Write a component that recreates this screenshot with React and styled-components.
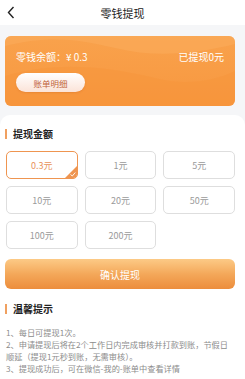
import React, { useState } from "react";
import styled, { createGlobalStyle } from "styled-components";

const Global = createGlobalStyle`
  html, body { margin: 0; padding: 0; }
  body { font-family: "Noto Sans CJK SC", "Noto Sans", sans-serif; background: #f5f6f8; }
  * { box-sizing: border-box; }
`;

const Page = styled.div`
  width: 245px;
  min-height: 379px;
  display: flex;
  flex-direction: column;
  background: #f5f6f8;
`;

const Header = styled.div`
  height: 25px;
  background: #fff;
  display: flex;
  align-items: center;
  justify-content: center;
  position: relative;
  font-size: 11px;
  color: #222;
`;

const Back = styled.svg`
  position: absolute;
  left: 7px;
  top: 6px;
`;

const Card = styled.div`
  margin: 11px 10px 0 5px;
  height: 70px;
  border-radius: 6px;
  background: linear-gradient(180deg, #f9a24c 0%, #f7973f 100%);
  position: relative;
  overflow: hidden;
  padding: 14px 11px 0 11px;
  display: flex;
  flex-direction: column;
  gap: 9px;
`;

const Waves = styled.svg`
  position: absolute;
  left: 0;
  top: 0;
  pointer-events: none;
`;

const CardRow = styled.div`
  position: relative;
  display: flex;
  justify-content: space-between;
  align-items: center;
  color: #fff;
  font-size: 10px;
  line-height: 14px;
`;

const BillButton = styled.div`
  position: relative;
  width: 69px;
  height: 19px;
  border-radius: 10px;
  background: linear-gradient(180deg, #ffffff 0%, #fbe3d8 100%);
  box-shadow: 0 1px 2px rgba(190, 90, 30, 0.25);
  color: #c0623a;
  font-size: 8.5px;
  display: flex;
  align-items: center;
  justify-content: center;
`;

const Panel = styled.div`
  flex: 1;
  margin-top: 9px;
  background: #fff;
  border-radius: 10px 10px 0 0;
  padding: 12px 10px 0 5px;
  display: flex;
  flex-direction: column;
`;

const SectionTitle = styled.div`
  display: flex;
  align-items: center;
  gap: 6px;
  font-size: 10px;
  font-weight: 700;
  color: #222;
  line-height: 14px;
  &::before {
    content: "";
    width: 2px;
    height: 10px;
    background: #f0a060;
  }
`;

const Grid = styled.div`
  margin-top: 10px;
  display: grid;
  grid-template-columns: repeat(3, 1fr);
  column-gap: 7px;
  row-gap: 7px;
  padding-left: 1px;
`;

const Amount = styled.div`
  height: 28px;
  border-radius: 5px;
  border: 1px solid ${(p) => (p.$active ? "#ef9550" : "#dedede")};
  color: ${(p) => (p.$active ? "#e8925a" : "#9a9a9a")};
  font-size: 9px;
  display: flex;
  align-items: center;
  justify-content: center;
  position: relative;
  overflow: hidden;
`;

const Tick = styled.svg`
  position: absolute;
  right: 0;
  bottom: 0;
`;

const Confirm = styled.div`
  margin-top: 10px;
  height: 30px;
  border-radius: 6px;
  background: linear-gradient(180deg, #fcca86 0%, #f4a85a 50%, #ec8d3c 100%);
  color: #fff;
  font-size: 10px;
  display: flex;
  align-items: center;
  justify-content: center;
`;

const TipsTitle = styled(SectionTitle)`
  margin-top: 13px;
`;

const Tips = styled.div`
  margin-top: 10px;
  padding-left: 1px;
  font-size: 8.2px;
  line-height: 12px;
  color: #8c8c8c;
`;

const amounts = ["0.3元", "1元", "5元", "10元", "20元", "50元", "100元", "200元"];

export default function App() {
  const [sel, setSel] = useState(0);
  return (
    <>
      <Global />
      <Page>
        <Header>
          <Back width="8" height="13" viewBox="0 0 8 13">
            <path d="M6.5 1 L1.5 6.5 L6.5 12" fill="none" stroke="#222" strokeWidth="1.4" />
          </Back>
          零钱提现
        </Header>
        <Card>
          <Waves width="230" height="70" viewBox="0 0 230 70">
            <path d="M0 10 C40 0 70 2 110 12 C150 22 190 18 230 8 L230 0 L0 0 Z" fill="#fbad5d" opacity="0.5" />
            <path d="M0 40 C50 25 100 30 150 42 C180 50 210 45 230 35 L230 70 L0 70 Z" fill="#f69236" opacity="0.35" />
          </Waves>
          <CardRow>
            <span>零钱余额：¥ 0.3</span>
            <span>已提现0元</span>
          </CardRow>
          <BillButton>账单明细</BillButton>
        </Card>
        <Panel>
          <SectionTitle>提现金额</SectionTitle>
          <Grid>
            {amounts.map((a, i) => (
              <Amount key={a} $active={i === sel} onClick={() => setSel(i)}>
                {a}
                {i === sel && (
                  <Tick width="12" height="12" viewBox="0 0 12 12">
                    <path d="M12 0 L12 12 L0 12 Z" fill="#ef9550" />
                    <path d="M5.5 8.5 L7.3 10 L10.3 6.5" fill="none" stroke="#fff" strokeWidth="0.9" />
                  </Tick>
                )}
              </Amount>
            ))}
          </Grid>
          <Confirm>确认提现</Confirm>
          <TipsTitle>温馨提示</TipsTitle>
          <Tips>
            <div>1、每日可提现1次。</div>
            <div>2、申请提现后将在2个工作日内完成审核并打款到账，节假日顺延（提现1元秒到账，无需审核）。</div>
            <div>3、提现成功后，可在微信-我的-账单中查看详情</div>
          </Tips>
        </Panel>
      </Page>
    </>
  );
}
